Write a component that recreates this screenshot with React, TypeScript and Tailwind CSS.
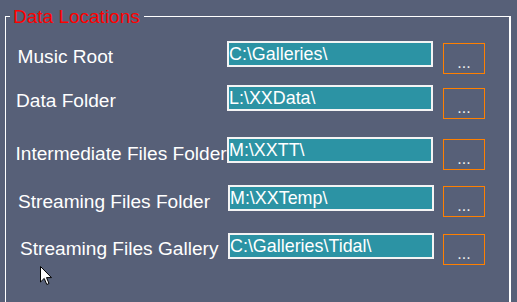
import React from "react";

interface LocationRow {
 label: string;
 value: string;
 rowClass: string; // height of the row band
 labelClass: string; // width / offsets of label cell
 btnClass: string; // offset of the browse button
}

const rows: LocationRow[] = [
 { label: "Music Root", value: "C:\\Galleries\\", rowClass: "h-[44px]", labelClass: "w-[221px] pl-[11.6px] pt-[5px]", btnClass: "ml-[10px] mt-[2px]" },
 { label: "Data Folder", value: "L:\\XXData\\", rowClass: "h-[52px]", labelClass: "w-[221px] pl-[10px] pt-[5px]", btnClass: "ml-[10px] mt-[3px]" },
 { label: "Intermediate Files Folder", value: "M:\\XXTT\\", rowClass: "h-[48px]", labelClass: "w-[221px] pl-[9.5px] pt-[6px]", btnClass: "ml-[10px] mt-[2px]" },
 { label: "Streaming Files Folder", value: "M:\\XXTemp\\", rowClass: "h-[48px]", labelClass: "w-[222px] pl-[12px] pt-[6px]", btnClass: "ml-[9px] mt-[1px]" },
 { label: "Streaming Files Gallery", value: "C:\\Galleries\\Tidal\\", rowClass: "h-[40px]", labelClass: "w-[222px] pl-[14px] pt-[5.3px]", btnClass: "ml-[9px] mt-[1px]" },
];

export default function App() {
 return (
 <div className="relative w-[517px] h-[302px] overflow-hidden bg-[#576078] font-['Liberation_Sans',Arial,sans-serif]">
 <fieldset className="ml-[5px] mt-[6px] w-[506px] h-[320px] border-l border-t border-r-2 border-white">
 <legend className="ml-[4px] pl-[3px] pr-[4px] text-[19px] leading-[21px] text-[#ff0000]">
 Data Locations
 </legend>

 <div className="flex flex-col pt-[14px]">
 {rows.map((r) => (
 <div key={r.label} className={`flex items-start ${r.rowClass}`}>
 <div className={`shrink-0 whitespace-nowrap text-[19.1px] leading-[22px] text-white ${r.labelClass}`}>
 {r.label}
 </div>
 <div className="relative shrink-0 w-[206px] h-[26px] bg-[#2c93a4] border-2 border-[#f4f4f4] pt-[1px] text-[17.9px] leading-[20px] text-white whitespace-nowrap overflow-hidden">
 {r.value}
 </div>
 <button
 className={`shrink-0 w-[42px] h-[31px] border border-[#ff8000] flex items-center justify-center text-[16px] leading-[18px] text-[#eeeeee] ${r.btnClass}`}
 >
 <span className="pt-[8px]">...</span>
 </button>
 </div>
 ))}
 </div>
 </fieldset>

 {/* mouse pointer captured in the shot */}
 <svg className="absolute left-[40px] top-[266px]" width="13" height="20" viewBox="0 0 13 20">
 <path d="M0.5 0.5 L0.5 16 L4.2 12.4 L6.8 18.5 L9 17.5 L6.5 11.6 L11.5 11.6 Z" fill="#ffffff" stroke="#000000" strokeWidth="1" />
 </svg>
 </div>
 );
}
